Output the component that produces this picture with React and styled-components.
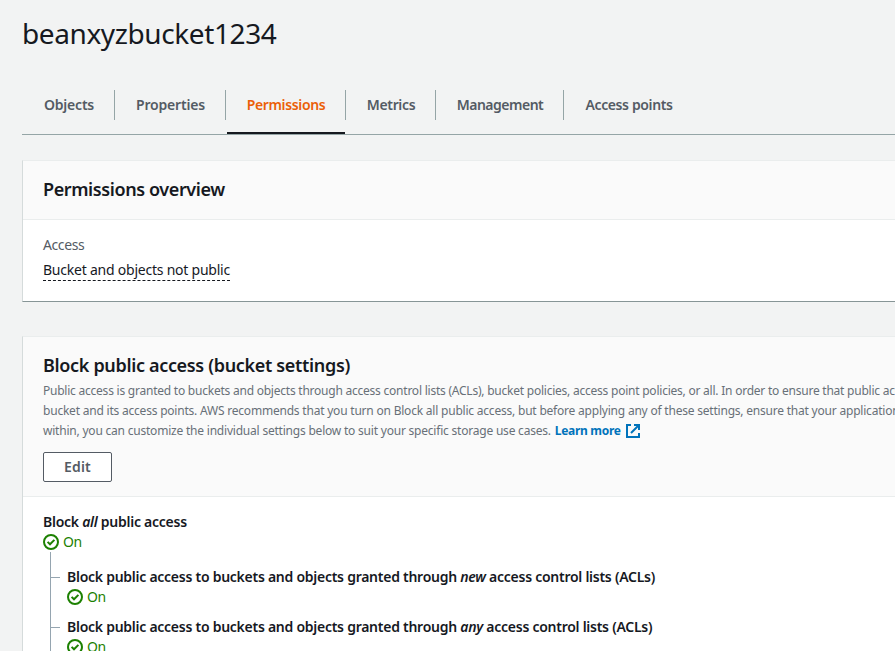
import styled, { createGlobalStyle } from "styled-components";

const tabs = [
    { label: "Objects", width: 93, spacing: "-0.2px" },
    { label: "Properties", width: 111, spacing: "-0.2px" },
    { label: "Permissions", width: 120, spacing: "-0.35px", active: true },
    { label: "Metrics", width: 90, spacing: "-0.35px" },
    { label: "Management", width: 128, spacing: "-0.5px" },
    { label: "Access points", width: 129, spacing: "-0.38px" },
]

const settings = ["new", "any"]

const CheckIcon = () => (
    <svg width="16" height="16" viewBox="0 0 16 16" fill="none" stroke="#1d8102" strokeWidth="2">
        <circle cx="8" cy="8" r="7" />
        <path d="M4.6 7.9 7 10.3 11.4 5.9" />
    </svg>
)

const ExternalIcon = () => (
    <svg width="14" height="14" viewBox="0 0 14 14" fill="none" stroke="#0073bb" strokeWidth="2">
        <path d="M5 1H1v12h12V9" />
        <path d="M8 1h5v5M13 1 5 9" />
    </svg>
)

const StatusOn = () => (
    <Status>
        <CheckIcon />
        <span>On</span>
    </Status>
)

const App = () => {

    return (
        <>
            <GlobalStyle />
            <Main>
                <BucketName>beanxyzbucket1234</BucketName>

                <Tabs>
                    {tabs.map(tab => (
                        <Tab key={tab.label} $width={tab.width} $active={tab.active}>
                            <TabLabel $spacing={tab.spacing}>{tab.label}</TabLabel>
                        </Tab>
                    ))}
                </Tabs>

                <Card>
                    <CardHeader $height={59}>
                        <Title $spacing="-0.4px">Permissions overview</Title>
                    </CardHeader>
                    <Overview>
                        <Label>Access</Label>
                        <Value>Bucket and objects not public</Value>
                    </Overview>
                </Card>

                <Card $tall>
                    <CardHeader $height={160}>
                        <Title $spacing="-0.33px">Block public access (bucket settings)</Title>
                        <Description>
                            <Line $spacing="-0.23px">Public access is granted to buckets and objects through access control lists (ACLs), bucket policies, access point policies, or all. In order to ensure that public access to this</Line>
                            <Line $spacing="-0.21px">bucket and its access points. AWS recommends that you turn on Block all public access, but before applying any of these settings, ensure that your applications will work</Line>
                            <Line $spacing="-0.21px">
                                within, you can customize the individual settings below to suit your specific storage use cases.
                                <Link href="#">Learn more <ExternalIcon /></Link>
                            </Line>
                        </Description>
                        <Button>Edit</Button>
                    </CardHeader>
                    <Settings>
                        <Setting>
                            <SettingName>Block <em>all</em> public access</SettingName>
                            <StatusOn />
                        </Setting>
                        <Tree>
                            {settings.map(kind => (
                                <Branch key={kind}>
                                    <SettingName>Block public access to buckets and objects granted through <em>{kind}</em> access control lists (ACLs)</SettingName>
                                    <StatusOn />
                                </Branch>
                            ))}
                        </Tree>
                    </Settings>
                </Card>
            </Main>
        </>
    )
}

export default App

const GlobalStyle = createGlobalStyle`
    * {
        box-sizing: border-box;
    }

    body {
        margin: 0;
        overflow: hidden;
        background: #f2f3f3;
        color: #16191f;
        font-family: "Noto Sans", sans-serif;
        font-size: 14px;
        line-height: 20px;
    }
`

const Main = styled.main`
    height: 651px;
    overflow: hidden;
    padding: 15px 0 0 22px;
    white-space: nowrap;
`

const BucketName = styled.h1`
    margin: 0;
    font-size: 28px;
    font-weight: 400;
    line-height: 36px;
    letter-spacing: -0.4px;
`

const Tabs = styled.nav`
    display: flex;
    height: 57px;
    margin-top: 27px;
    border-bottom: 1px solid #95a5a6;
`

const Tab = styled.div`
    display: flex;
    width: ${({ $width }) => $width}px;
    padding-top: 12px;
    color: ${({ $active }) => $active ? "#eb5f07" : "#545b64"};
    background: ${({ $active }) => $active
        ? "linear-gradient(#16191f, #16191f) 1px 100% / calc(100% - 2px) 2px no-repeat"
        : "none"};
`

const TabLabel = styled.span`
    display: flex;
    width: 100%;
    height: 30px;
    align-items: center;
    justify-content: center;
    padding-left: 1px;
    border-right: 1px solid #95a5a6;
    font-size: 14px;
    font-weight: 600;
    letter-spacing: ${({ $spacing }) => $spacing};

    ${Tab}:first-child & {
        padding-left: 2px;
    }

    ${Tab}:last-child & {
        border-right: none;
    }
`

const Card = styled.section`
    width: 1100px;
    height: ${({ $tall }) => $tall ? "400px" : "142px"};
    margin-top: ${({ $tall }) => $tall ? "34px" : "25px"};
    background: #fff;
    border: 1px solid #eaeded;
    border-left-color: #d5dbdb;
    border-bottom-color: #879596;
`

const CardHeader = styled.header`
    height: ${({ $height }) => $height}px;
    padding: 17px 20px 0;
    background: #fafafa;
    border-bottom: 1px solid #eaeded;
`

const Title = styled.h2`
    margin: 0;
    font-size: 18px;
    font-weight: 600;
    line-height: 22px;
    letter-spacing: ${({ $spacing }) => $spacing};
`

const Overview = styled.div`
    display: flex;
    flex-direction: column;
    align-items: flex-start;
    gap: 5px;
    padding: 15px 20px;
`

const Label = styled.span`
    color: #545b64;
    letter-spacing: -0.4px;
`

const Value = styled.span`
    height: 21px;
    border-bottom: 1px dashed #16191f;
    letter-spacing: -0.23px;
`

const Description = styled.div`
    margin-top: 5px;
    color: #687078;
    font-size: 12px;
`

const Line = styled.p`
    display: flex;
    height: 20px;
    margin: 0;
    letter-spacing: ${({ $spacing }) => $spacing};
`

const Link = styled.a`
    display: flex;
    align-items: center;
    gap: 5px;
    margin-left: 4px;
    color: #0073bb;
    font-weight: 700;
    letter-spacing: -0.3px;
    text-decoration: none;
`

const Button = styled.button`
    width: 69px;
    height: 30px;
    margin-top: 11px;
    padding: 0 0 2px;
    border: 1px solid #545b64;
    border-radius: 2px;
    background: #fff;
    color: #545b64;
    font: 600 14px "Noto Sans", sans-serif;
    letter-spacing: 0.2px;
`

const Settings = styled.div`
    padding: 15px 20px;
`

const Setting = styled.div`
    height: 40px;
`

const SettingName = styled.div`
    font-size: 14px;
    font-weight: 600;
    letter-spacing: -0.26px;
`

const Status = styled.div`
    display: flex;
    height: 20px;
    align-items: center;
    gap: 4px;
    color: #1d8102;
    letter-spacing: -0.5px;
`

const Tree = styled.div`
    height: 300px;
    margin-left: 7px;
    padding-top: 15px;
    border-left: 1px solid #95a5b0;
`

const Branch = styled.div`
    height: 50px;
    padding-left: 16px;
    background: linear-gradient(#95a5b0, #95a5b0) 0 10px / 9px 1px no-repeat;
`
